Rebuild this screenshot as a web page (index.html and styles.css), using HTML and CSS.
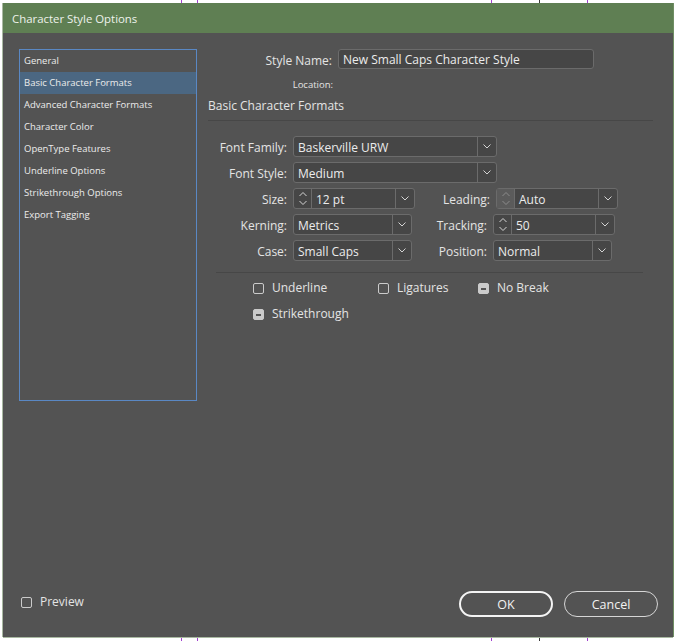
FILE: index.html
```html
<!DOCTYPE html>
<html lang="en">
<head>
    <meta charset="UTF-8">
    <title>Character Style Options</title>
    <link rel="stylesheet" href="styles.css">
</head>
<body>

<div class="desk">
    <!-- column guides of the document behind the dialog -->
    <span class="guide purple g1"></span>
    <span class="guide purple g2"></span>
    <span class="guide purple g3"></span>
    <span class="guide dark g4"></span>
    <span class="guide purple g5"></span>

    <div class="dialog">
        <div class="titlebar">Character Style Options</div>

        <div class="dialog-body">
            <ul class="cat-list">
                <li>General</li>
                <li class="active">Basic Character Formats</li>
                <li>Advanced Character Formats</li>
                <li>Character Color</li>
                <li>OpenType Features</li>
                <li>Underline Options</li>
                <li>Strikethrough Options</li>
                <li>Export Tagging</li>
            </ul>

            <div class="panel">
                <div class="name-row">
                    <span class="name-label">Style Name:</span>
                    <div class="text-field">New Small Caps Character Style</div>
                </div>
                <div class="location-row">
                    <span class="name-label small">Location:</span>
                </div>
                <div class="section-title">Basic Character Formats</div>
                <div class="sep"></div>

                <div class="form">
                    <div class="row">
                        <span class="label">Font Family:</span>
                        <div class="select w-wide"><span class="value">Baskerville URW</span><span class="drop"><svg viewBox="0 0 8 5"><path d="M0.5 0.5 L4 4 L7.5 0.5"/></svg></span></div>
                    </div>
                    <div class="row">
                        <span class="label">Font Style:</span>
                        <div class="select w-wide"><span class="value">Medium</span><span class="drop"><svg viewBox="0 0 8 5"><path d="M0.5 0.5 L4 4 L7.5 0.5"/></svg></span></div>
                    </div>
                    <div class="row">
                        <span class="label">Size:</span>
                        <div class="select w-combo">
                            <span class="spin"><svg viewBox="0 0 8 13"><path d="M0.5 4 L4 0.5 L7.5 4"/><path d="M0.5 9 L4 12.5 L7.5 9"/></svg></span>
                            <span class="value">12 pt</span>
                            <span class="drop"><svg viewBox="0 0 8 5"><path d="M0.5 0.5 L4 4 L7.5 0.5"/></svg></span>
                        </div>
                        <span class="label2">Leading:</span>
                        <div class="select w-combo">
                            <span class="spin dim"><svg viewBox="0 0 8 13"><path d="M0.5 4 L4 0.5 L7.5 4"/><path d="M0.5 9 L4 12.5 L7.5 9"/></svg></span>
                            <span class="value">Auto</span>
                            <span class="drop"><svg viewBox="0 0 8 5"><path d="M0.5 0.5 L4 4 L7.5 0.5"/></svg></span>
                        </div>
                    </div>
                    <div class="row">
                        <span class="label">Kerning:</span>
                        <div class="select w-short"><span class="value">Metrics</span><span class="drop"><svg viewBox="0 0 8 5"><path d="M0.5 0.5 L4 4 L7.5 0.5"/></svg></span></div>
                        <span class="label2">Tracking:</span>
                        <div class="select w-combo">
                            <span class="spin"><svg viewBox="0 0 8 13"><path d="M0.5 4 L4 0.5 L7.5 4"/><path d="M0.5 9 L4 12.5 L7.5 9"/></svg></span>
                            <span class="value">50</span>
                            <span class="drop"><svg viewBox="0 0 8 5"><path d="M0.5 0.5 L4 4 L7.5 0.5"/></svg></span>
                        </div>
                    </div>
                    <div class="row">
                        <span class="label">Case:</span>
                        <div class="select w-short"><span class="value">Small Caps</span><span class="drop"><svg viewBox="0 0 8 5"><path d="M0.5 0.5 L4 4 L7.5 0.5"/></svg></span></div>
                        <span class="label2">Position:</span>
                        <div class="select w-short"><span class="value">Normal</span><span class="drop"><svg viewBox="0 0 8 5"><path d="M0.5 0.5 L4 4 L7.5 0.5"/></svg></span></div>
                    </div>
                </div>

                <div class="sep sep2"></div>

                <div class="checks">
                    <div class="check-row">
                        <label class="check c1"><span class="cb"></span>Underline</label>
                        <label class="check c2"><span class="cb"></span>Ligatures</label>
                        <label class="check"><span class="cb mixed"></span>No Break</label>
                    </div>
                    <div class="check-row">
                        <label class="check"><span class="cb mixed"></span>Strikethrough</label>
                    </div>
                </div>
            </div>
        </div>

        <div class="footer">
            <label class="check preview"><span class="cb"></span>Preview</label>
            <div class="buttons">
                <div class="btn primary">OK</div>
                <div class="btn">Cancel</div>
            </div>
        </div>
    </div>
</div>

</body>
</html>
```

FILE: styles.css
```css
body {
    margin: 0;
    padding: 0;
    background-color: #ffffff;
    font-family: 'Open Sans', 'Noto Sans', sans-serif;
    color: #e4e4e4;
    overflow: hidden;
}
.desk {
    position: relative;
    width: 675px;
    height: 641px;
    padding: 3px 0 0 3px;
    box-sizing: border-box;
}
.guide {
    position: absolute;
    top: 0;
    bottom: 0;
    width: 1px;
}
.guide.purple { background-color: #a23fd0; }
.guide.dark { background-color: #3a3a3a; }
.g1 { left: 181px; }
.g2 { left: 197px; }
.g3 { left: 491px; }
.g4 { left: 539px; }
.g5 { left: 587px; }

.dialog {
    position: relative;
    z-index: 1;
    width: 670px;
    height: 634px;
    background-color: #535353;
    display: flex;
    flex-direction: column;
    box-shadow: -1px 0 0 #a9b9a2, 0 1px 0 #a9b9a2, 1px 0 0 #6f8e63;
}
.titlebar {
    height: 30px;
    background-color: #5f7f53;
    color: #eef2ec;
    font-size: 11.4px;
    line-height: 31px;
    padding-left: 9px;
    flex-shrink: 0;
}
.dialog-body {
    flex: 1;
    display: flex;
    align-items: flex-start;
    padding: 16px 0 0 16px;
}

/* category list */
.cat-list {
    list-style: none;
    margin: 0;
    padding: 0;
    width: 176px;
    height: 350px;
    border: 1px solid #5a88c4;
    flex-shrink: 0;
}
.cat-list li {
    height: 22px;
    line-height: 22px;
    padding-left: 4px;
    font-size: 9.5px;
    color: #ececec;
    white-space: nowrap;
}
.cat-list li.active {
    background-color: #4b6782;
}

/* right panel */
.panel {
    margin-left: 11px;
    flex: 1;
}
.name-row {
    display: flex;
    align-items: center;
    height: 20px;
}
.name-label {
    width: 124px;
    text-align: right;
    margin-right: 6px;
    font-size: 12px;
    padding-top: 2px;
}
.name-label.small {
    width: 125px;
    font-size: 9.5px;
    padding-top: 0;
}
.text-field {
    width: 256px;
    height: 20px;
    box-sizing: border-box;
    background-color: #464646;
    border: 1px solid #6b6b6b;
    border-radius: 3px;
    font-size: 12px;
    line-height: 20px;
    padding-left: 4px;
    color: #ececec;
}
.location-row {
    margin-top: 9px;
    height: 14px;
    line-height: 14px;
    display: flex;
}
.section-title {
    margin-top: 6px;
    font-size: 12px;
    line-height: 16px;
}
.sep {
    margin-top: 6px;
    width: 445px;
    height: 1px;
    background-color: #474747;
}
.sep2 {
    margin-top: 11px;
    margin-left: 8px;
    width: 427px;
}

.form {
    margin-top: 15px;
    display: flex;
    flex-direction: column;
    gap: 5px;
}
.row {
    display: flex;
    align-items: center;
    height: 21px;
}
.label, .label2 {
    text-align: right;
    font-size: 12px;
    margin-right: 6px;
    padding-top: 2px;
    flex-shrink: 0;
}
.label { width: 79px; }
.label2 { width: 75px; }

.select {
    display: flex;
    height: 21px;
    box-sizing: border-box;
    border: 1px solid #6b6b6b;
    border-radius: 3px;
    background-color: #464646;
    flex-shrink: 0;
}
.w-wide { width: 204px; }
.w-combo { width: 122px; }
.w-short { width: 119px; }
.select .value {
    flex: 1;
    padding-left: 4px;
    font-size: 12px;
    line-height: 21px;
    color: #ececec;
    white-space: nowrap;
}
.select .drop {
    width: 18px;
    border-left: 1px solid #6b6b6b;
    display: flex;
    align-items: center;
    justify-content: center;
}
.select .drop svg {
    width: 8px;
    height: 5px;
}
.select .spin {
    width: 17px;
    border-right: 1px solid #6b6b6b;
    display: flex;
    align-items: center;
    justify-content: center;
}
.select .spin.dim {
    background-color: #5b5b5b;
}
.select .spin svg {
    width: 8px;
    height: 13px;
}
.select svg path {
    fill: none;
    stroke: #d4d4d4;
    stroke-width: 1;
}
.select .spin.dim svg path {
    stroke: #8c8c8c;
}

/* checkboxes */
.checks {
    margin-top: 7px;
    padding-left: 45px;
    display: flex;
    flex-direction: column;
    gap: 10px;
}
.check-row {
    display: flex;
    height: 16px;
}
.check {
    display: flex;
    align-items: center;
    font-size: 12px;
    line-height: 16px;
}
.check.c1 { width: 125px; }
.check.c2 { width: 100px; }
.cb {
    width: 11px;
    height: 11px;
    box-sizing: border-box;
    border: 1px solid #cbcbcb;
    border-radius: 2px;
    margin-right: 8px;
    position: relative;
    flex-shrink: 0;
}
.cb.mixed {
    background-color: #cbcbcb;
}
.cb.mixed::after {
    content: '';
    position: absolute;
    left: 2px;
    top: 4px;
    width: 5px;
    height: 2px;
    background-color: #555555;
}

/* footer */
.footer {
    height: 26px;
    flex-shrink: 0;
    display: flex;
    align-items: center;
    justify-content: space-between;
    padding: 0 15px 20px 18px;
}
.check.preview {
    margin-top: -4px;
}
.buttons {
    display: flex;
    gap: 11px;
}
.btn {
    width: 94px;
    height: 26px;
    box-sizing: border-box;
    border: 1px solid #d6d6d6;
    border-radius: 13px;
    font-size: 12.5px;
    line-height: 25px;
    text-align: center;
    color: #f2f2f2;
}
.btn.primary {
    border: 2px solid #f4f4f4;
    line-height: 23px;
}
```
